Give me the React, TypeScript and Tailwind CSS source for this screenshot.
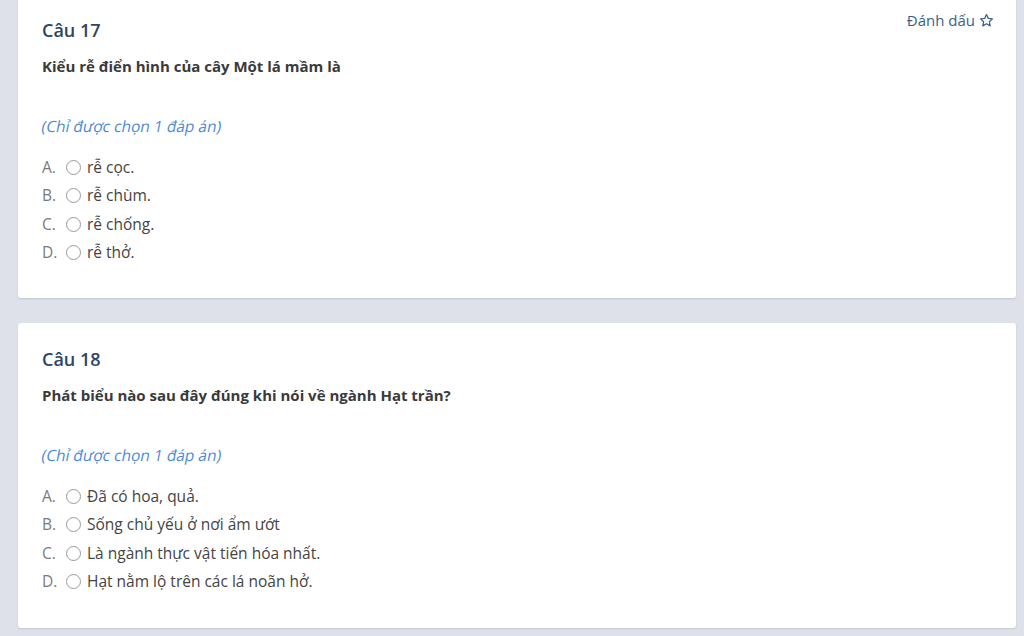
import React from "react";

type Q = { num: number; text: string; options: string[]; mark?: boolean };

const questions: Q[] = [
  {
    num: 17,
    text: "Kiểu rễ điển hình của cây Một lá mầm là",
    options: ["rễ cọc.", "rễ chùm.", "rễ chống.", "rễ thở."],
    mark: true,
  },
  {
    num: 18,
    text: "Phát biểu nào sau đây đúng khi nói về ngành Hạt trần?",
    options: [
      "Đã có hoa, quả.",
      "Sống chủ yếu ở nơi ẩm ướt",
      "Là ngành thực vật tiến hóa nhất.",
      "Hạt nằm lộ trên các lá noãn hở.",
    ],
  },
];

const letters = ["A.", "B.", "C.", "D."];

function Star() {
  return (
    <svg width="15" height="15" viewBox="0 0 24 24" fill="none" stroke="#3d5f85" strokeWidth="2" strokeLinejoin="round">
      <path d="M12 2.5l2.9 6.1 6.6.8-4.9 4.6 1.3 6.6L12 17.3l-5.9 3.3 1.3-6.6-4.9-4.6 6.6-.8z" />
    </svg>
  );
}

function Card({ q, first }: { q: Q; first?: boolean }) {
  return (
    <div
      className={`relative bg-white rounded-[3px] shadow-[0_1px_2px_rgba(0,0,0,0.12)] pl-6 pr-6 pt-6 pb-[33px] ${
        first ? "h-[304px]" : "h-[305px]"
      }`}
    >
      {q.mark && (
        <div className="absolute right-[22px] top-[16px] flex items-center gap-[4px] text-[15px] leading-5 text-[#3d5f85]">
          <span>Đánh dấu</span>
          <Star />
        </div>
      )}
      <div className="text-[18px] leading-6 font-semibold text-[#2d4661]">Câu {q.num}</div>
      <div className="mt-[14px] text-[15px] leading-5 font-bold text-[#3a3a3a]">{q.text}</div>
      <div className="mt-[40px] text-[15.5px] leading-5 text-[#4a8ad4]">
        <span className="inline-block -skew-x-[11deg]">(Chỉ được chọn 1 đáp án)</span>
      </div>
      <div className="mt-[17px] flex flex-col">
        {q.options.map((o, i) => (
          <div key={i} className="flex items-center h-[28.5px] text-[15.5px]">
            <span className="w-[24px] text-[#7a7a7a]">{letters[i]}</span>
            <span className="w-[15px] h-[15px] rounded-full border border-[#9a9a9a] bg-white mr-[6px]" />
            <span className="text-[#444]">{o}</span>
          </div>
        ))}
      </div>
    </div>
  );
}

export default function App() {
  return (
    <div
      className="w-[1024px] h-[636px] overflow-hidden bg-[#dfe1ea]"
      style={{ fontFamily: '"Open Sans", "Noto Sans", sans-serif' }}
    >
      <div className="-mt-[6px] pl-[18px] pr-[8px] flex flex-col gap-[25px]">
        {questions.map((q, i) => (
          <Card key={q.num} q={q} first={i === 0} />
        ))}
      </div>
    </div>
  );
}
